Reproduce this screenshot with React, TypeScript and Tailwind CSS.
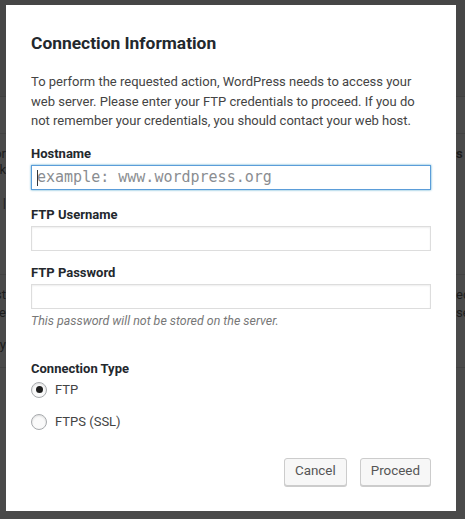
import { useState } from "react";

// faint page rows that show round the edges of the dialog backdrop
function BackdropPage() {
  return (
    <div className="flex flex-col text-[13px] text-[#1c1c1c] font-['Roboto',sans-serif]">
      <div className="h-[97px] bg-[#464646] border-b border-[#404040]" />
      <div className="h-[37px] bg-[#4a4a4a] border-b border-[#424242]" />
      <div className="h-[141px] bg-[#4a4a4a] border-b border-[#424242] flex justify-between">
        <div className="w-[6px] overflow-hidden flex flex-col items-end pt-[12px] leading-[16px] whitespace-nowrap">
          <span>Vendor</span>
          <span>Link</span>
          <span className="mt-[17px]">|</span>
        </div>
        <div className="w-[9px] overflow-hidden flex flex-col pt-[12px] leading-[16px] whitespace-nowrap font-bold">
          <span>s</span>
        </div>
      </div>
      <div className="h-[93px] bg-[#4a4a4a] border-b border-[#424242] flex justify-between">
        <div className="w-[6px] overflow-hidden flex flex-col items-end pt-[11px] leading-[18px] whitespace-nowrap">
          <span>First</span>
          <span>Here</span>
          <span className="mt-[14px]">By</span>
        </div>
        <div className="w-[9px] overflow-hidden flex flex-col pt-[11px] leading-[18px] whitespace-nowrap">
          <span>ed</span>
          <span>se</span>
        </div>
      </div>
      <div className="h-[151px] bg-[#4a4a4a]" />
    </div>
  );
}

function Radio({ checked, label, onSelect }: { checked: boolean; label: string; onSelect: () => void }) {
  return (
    <label className="flex items-center gap-[8px] h-[16px] cursor-pointer" onClick={onSelect}>
      <span className="w-[16px] h-[16px] rounded-full border border-[#a7aaad] bg-[#fafafa] shadow-[inset_0_1px_2px_rgba(0,0,0,0.12)] flex items-center justify-center">
        {checked && <span className="w-[7px] h-[7px] rounded-full bg-[#1e1e1e]" />}
      </span>
      <span className="text-[13px] leading-[16px] text-[#444]">{label}</span>
    </label>
  );
}

export default function App() {
  const [type, setType] = useState("ftp");

  return (
    <div className="relative w-full h-[519px] overflow-hidden bg-[#4a4a4a] font-['Roboto',sans-serif]">
      <BackdropPage />

      <div className="absolute left-[6px] top-[5px] w-[450px] bg-white px-[25px] pt-[26px] pb-[25px] flex flex-col">
        <h1 className="text-[17.4px] leading-[24px] font-bold text-[#23282d]">Connection Information</h1>

        <p className="mt-[17px] text-[13px] leading-[19.5px] text-[#444]">
          To perform the requested action, WordPress needs to access your web server. Please enter your FTP credentials to proceed. If you do not remember your credentials, you should contact your web host.
        </p>

        <label className="mt-[14px] text-[13px] leading-[18px] font-bold text-[#23282d]">Hostname</label>
        <div className="relative mt-[2px]">
          <input
            className="w-full h-[25px] border border-[#5b9dd9] shadow-[0_0_2px_rgba(30,140,190,0.8)] outline-none px-[5px] text-[15px] font-['DejaVu_Sans_Mono',monospace] text-[#32373c] placeholder:text-[#8a8d91] caret-transparent"
            placeholder="example: www.wordpress.org"
          />
          <span className="absolute left-[6px] top-[5px] w-px h-[16px] bg-[#32373c]" />
        </div>

        <label className="mt-[16px] text-[13px] leading-[18px] font-bold text-[#23282d]">FTP Username</label>
        <input className="mt-[2px] w-full h-[25px] border border-[#ddd] shadow-[inset_0_1px_2px_rgba(0,0,0,0.07)] outline-none px-[5px] text-[13px]" />

        <label className="mt-[13px] text-[13px] leading-[18px] font-bold text-[#23282d]">FTP Password</label>
        <input
          type="password"
          className="mt-[2px] w-full h-[25px] border border-[#ddd] shadow-[inset_0_1px_2px_rgba(0,0,0,0.07)] outline-none px-[5px] text-[13px]"
        />
        <p className="mt-[4px] text-[12.4px] leading-[16px] italic text-[#777]">This password will not be stored on the server.</p>

        <span className="mt-[31px] text-[13px] leading-[18px] font-bold text-[#23282d]">Connection Type</span>
        <div className="mt-[4px] flex flex-col gap-[16px]">
          <Radio checked={type === "ftp"} label="FTP" onSelect={() => setType("ftp")} />
          <Radio checked={type === "ftps"} label="FTPS (SSL)" onSelect={() => setType("ftps")} />
        </div>

        <div className="mt-[28px] flex justify-end gap-[13px]">
          <button className="h-[28px] px-[10px] rounded-[3px] border border-[#ccc] bg-[#f7f7f7] shadow-[0_1px_0_#ccc] text-[13.4px] text-[#555]">
            Cancel
          </button>
          <button className="h-[28px] px-[10px] rounded-[3px] border border-[#ccc] bg-[#f7f7f7] shadow-[0_1px_0_#ccc] text-[13.4px] text-[#555]">
            Proceed
          </button>
        </div>
      </div>
    </div>
  );
}
